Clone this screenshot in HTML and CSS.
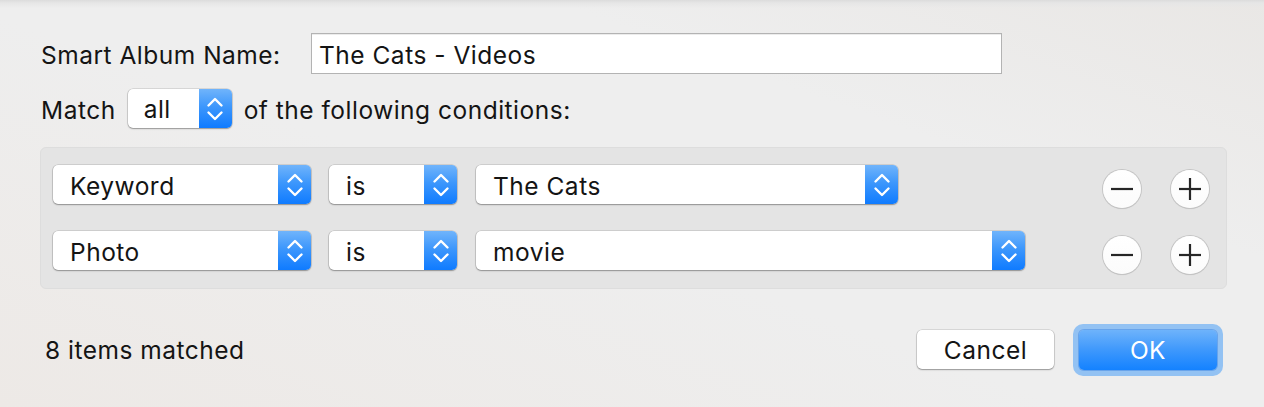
FILE: index.html
```html
<!DOCTYPE html>
<html>
<head>
<meta charset="utf-8">
<link rel="stylesheet" href="styles.css">
</head>
<body>
<div class="dialog">
  <div class="name-row">
    <label class="name-label">Smart Album Name:</label>
    <div class="text-field">The Cats - Videos</div>
  </div>
  <div class="match-row">
    <span class="match-text">Match</span>
    <div class="popup popup-all">
      <span class="popup-text">all</span>
      <span class="stepper"><svg width="32" height="39" viewBox="0 0 32 39"><polyline points="9.5,16.5 16,10 22.5,16.5"/><polyline points="9.5,23.5 16,30 22.5,23.5"/></svg></span>
    </div>
    <span class="match-text">of the following conditions:</span>
  </div>
  <div class="panel">
    <div class="cond-row">
      <div class="popup popup-field"><span class="popup-text">Keyword</span><span class="stepper"><svg width="32" height="39" viewBox="0 0 32 39"><polyline points="9.5,16.5 16,10 22.5,16.5"/><polyline points="9.5,23.5 16,30 22.5,23.5"/></svg></span></div>
      <div class="popup popup-op"><span class="popup-text">is</span><span class="stepper"><svg width="32" height="39" viewBox="0 0 32 39"><polyline points="9.5,16.5 16,10 22.5,16.5"/><polyline points="9.5,23.5 16,30 22.5,23.5"/></svg></span></div>
      <div class="popup popup-val1"><span class="popup-text">The Cats</span><span class="stepper"><svg width="32" height="39" viewBox="0 0 32 39"><polyline points="9.5,16.5 16,10 22.5,16.5"/><polyline points="9.5,23.5 16,30 22.5,23.5"/></svg></span></div>
      <div class="spacer"></div>
      <div class="round-btn"><svg width="38" height="38" viewBox="0 0 38 38"><line x1="8" y1="19" x2="30" y2="19"/></svg></div>
      <div class="round-btn"><svg width="38" height="38" viewBox="0 0 38 38"><line x1="8" y1="19" x2="30" y2="19"/><line x1="19" y1="8" x2="19" y2="30"/></svg></div>
    </div>
    <div class="cond-row">
      <div class="popup popup-field"><span class="popup-text">Photo</span><span class="stepper"><svg width="32" height="39" viewBox="0 0 32 39"><polyline points="9.5,16.5 16,10 22.5,16.5"/><polyline points="9.5,23.5 16,30 22.5,23.5"/></svg></span></div>
      <div class="popup popup-op"><span class="popup-text">is</span><span class="stepper"><svg width="32" height="39" viewBox="0 0 32 39"><polyline points="9.5,16.5 16,10 22.5,16.5"/><polyline points="9.5,23.5 16,30 22.5,23.5"/></svg></span></div>
      <div class="popup popup-val2"><span class="popup-text">movie</span><span class="stepper"><svg width="32" height="39" viewBox="0 0 32 39"><polyline points="9.5,16.5 16,10 22.5,16.5"/><polyline points="9.5,23.5 16,30 22.5,23.5"/></svg></span></div>
      <div class="spacer"></div>
      <div class="round-btn"><svg width="38" height="38" viewBox="0 0 38 38"><line x1="8" y1="19" x2="30" y2="19"/></svg></div>
      <div class="round-btn"><svg width="38" height="38" viewBox="0 0 38 38"><line x1="8" y1="19" x2="30" y2="19"/><line x1="19" y1="8" x2="19" y2="30"/></svg></div>
    </div>
  </div>
  <div class="footer">
    <span class="count">8 items matched</span>
    <div class="spacer"></div>
    <div class="btn btn-cancel">Cancel</div>
    <div class="focus-ring"><div class="btn btn-ok">OK</div></div>
  </div>
</div>
</body>
</html>
```
FILE: styles.css
```css
html, body {
  margin: 0;
  height: 100%;
}
body {
  width: 1264px;
  height: 407px;
  overflow: hidden;
  font-family: "Inter", "Liberation Sans", Arial, sans-serif;
  font-size: 24.5px;
  letter-spacing: 0.5px;
  color: #141414;
  background:
    linear-gradient(to bottom, #dcdcdc 0, #e6e6e6 3px, rgba(238,238,238,0) 8px),
    linear-gradient(20deg, #ede9e6 0%, #eeeeee 45%, #eeeeee 70%, #e9e7e5 100%);
}
.dialog {
  padding: 33px 0 0 41px;
  box-sizing: border-box;
  height: 407px;
}
.name-row {
  display: flex;
  align-items: center;
  height: 41px;
}
.name-label {
  width: 270px;
  padding-top: 3px;
}
.text-field {
  width: 691px;
  height: 41px;
  box-sizing: border-box;
  background: #fff;
  border: 1px solid #b3b3b3;
  box-shadow: inset 0 1px 0 #ececec;
  padding: 3px 0 0 7px;
  display: flex;
  align-items: center;
}
.match-row {
  display: flex;
  align-items: center;
  margin-top: 14px;
  height: 40px;
}
.match-text {
  padding-top: 3px;
}
.popup {
  display: flex;
  align-items: stretch;
  height: 39px;
  background: #fff;
  border-radius: 5px;
  box-shadow: 0 0 0 0.6px rgba(0,0,0,0.18), 0 1px 1.5px rgba(0,0,0,0.3);
  box-sizing: border-box;
  overflow: hidden;
}
.popup-text {
  flex: 1;
  display: flex;
  align-items: center;
  padding: 2px 0 0 17px;
}
.stepper {
  width: 33px;
  background: linear-gradient(to bottom, #70b4fb 0%, #3d97fc 45%, #0f7bff 100%);
  display: flex;
  align-items: center;
  justify-content: center;
}
.stepper svg polyline {
  fill: none;
  stroke: #fff;
  stroke-width: 2.4;
  stroke-linecap: round;
  stroke-linejoin: round;
}
.popup-all {
  width: 104px;
  margin: 0 12px 0 12px;
}
.popup-all .popup-text {
  padding-left: 16px;
}
.panel {
  margin-top: 19px;
  width: 1187px;
  height: 142px;
  box-sizing: border-box;
  margin-left: -1px;
  background: #e4e4e4;
  border: 1px solid #dddddd;
  border-radius: 6px;
  padding: 17px 16px 0 12px;
  display: flex;
  flex-direction: column;
  gap: 27px;
}
.cond-row {
  display: flex;
  align-items: center;
  height: 39px;
}
.popup-field { width: 258px; }
.popup-op { width: 128px; margin-left: 18px; }
.popup-val1 { width: 422px; margin-left: 19px; }
.popup-val2 { width: 549px; margin-left: 19px; }
.spacer { flex: 1; }
.round-btn {
  width: 38px;
  height: 38px;
  border-radius: 50%;
  background: linear-gradient(#ffffff, #fbfbfb);
  box-shadow: 0 0 0 1px #c4c4c4, 0 1px 1px rgba(0,0,0,0.15);
  margin: 8px 0 0 30px;
  display: flex;
  align-items: center;
  justify-content: center;
  box-sizing: border-box;
}
.round-btn:last-child { margin-right: 1px; }
.round-btn svg line {
  stroke: #262626;
  stroke-width: 2.2;
}
.footer {
  display: flex;
  align-items: center;
  margin-top: 35px;
  height: 51px;
  padding-right: 41px;
}
.count {
  margin-left: 4px;
}
.btn {
  height: 39px;
  border-radius: 5px;
  display: flex;
  align-items: center;
  justify-content: center;
  box-sizing: border-box;
}
.btn-cancel {
  width: 137px;
  background: #fff;
  box-shadow: 0 0 0 0.6px rgba(0,0,0,0.18), 0 1px 1.5px rgba(0,0,0,0.3);
  margin-right: 19px;
}
.focus-ring {
  padding: 6px;
  border-radius: 10px;
  background: #93c2f3;
}
.btn-ok {
  width: 138px;
  height: 40px;
  color: #fff;
  background: linear-gradient(to bottom, #6eb3fb 0%, #3e98fc 50%, #1482ff 100%);
  box-shadow: 0 0 0 1px rgba(30,110,220,0.35);
}
```
